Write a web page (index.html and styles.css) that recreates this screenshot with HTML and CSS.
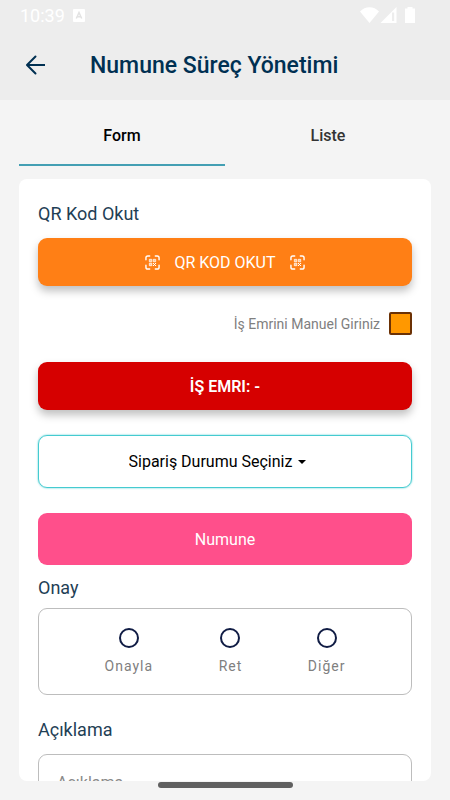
FILE: index.html
```html
<!DOCTYPE html>
<html lang="tr">
<head>
<meta charset="utf-8">
<meta name="viewport" content="width=device-width, initial-scale=1">
<title>Numune Süreç Yönetimi</title>
<link rel="stylesheet" href="styles.css">
</head>
<body>
<svg width="0" height="0" class="sprite" aria-hidden="true">
  <symbol id="qr" viewBox="0 0 16 16">
    <path d="M1 5V3a2 2 0 0 1 2-2h2M11 1h2a2 2 0 0 1 2 2v2M15 11v2a2 2 0 0 1-2 2h-2M5 15H3a2 2 0 0 1-2-2v-2" fill="none" stroke="currentColor" stroke-width="1.5" stroke-linecap="round"/>
    <path d="M4.6 4.6h2.6v2.6H4.6zM8.8 4.6h2.6v2.6H8.8zM4.6 8.8h2.6v2.6H4.6z" fill="currentColor" fill-opacity=".55" stroke="currentColor" stroke-opacity=".85" stroke-width=".9"/>
    <path d="M8.400 8.400h1.200v1.200H8.400zM10.600 8.400h1.200v1.200h-1.200zM9.500 9.500h1.200v1.200H9.500zM8.400 10.600h1.200v1.200H8.400zM10.600 10.600h1.200v1.200h-1.200z" fill="currentColor"/>
  </symbol>
</svg>
<header class="header">
  <div class="status">
    <span class="clock">10:39</span>
    <svg class="app" width="12" height="13" viewBox="0 0 12 13" aria-hidden="true"><rect width="12" height="13" rx="1" fill="#fff"/><path d="M3.300 9.500 6 3.500l2.700 6M4.300 7.800h3.400" fill="none" stroke="#e2e2e2" stroke-width="1.500"/></svg>
    <svg class="signals" width="56" height="16" viewBox="0 0 56 16" fill="#fff" aria-hidden="true"><path d="M0 4.500C5-1.200 14-1.200 19 4.500L9.500 16z"/><path fill-rule="evenodd" d="M20.500 16 36.500 0v16zM32 5.500V14h2.200V5.500z"/><path d="M47.500 0h5v1.500h2.500V16H45V1.500h2.500z"/></svg>
  </div>
  <div class="titlebar">
    <button class="back" type="button" aria-label="Geri"><svg width="20" height="20" viewBox="0 0 20 20" fill="none" stroke="currentColor" stroke-width="2" stroke-linejoin="round" aria-hidden="true"><path d="M20 10H2"/><path d="M10.500 1.500 2 10l8.500 8.500" stroke-linecap="round"/></svg></button>
    <h1 class="title">Numune Süreç Yönetimi</h1>
  </div>
</header>
<nav class="tabs">
  <a class="tab tab-active" href="#form">Form</a>
  <a class="tab" href="#liste">Liste</a>
</nav>
<main class="card" id="form">
  <form class="form">
    <h2 class="label">QR Kod Okut</h2>
    <button class="bar bar-qr" type="button"><svg width="15" height="15" aria-hidden="true"><use href="#qr"/></svg>QR KOD OKUT<svg width="15" height="15" aria-hidden="true"><use href="#qr"/></svg></button>
    <label class="manual">İş Emrini Manuel Giriniz<input class="check" type="checkbox"></label>
    <button class="bar bar-order" type="button">İŞ EMRI: -</button>
    <label class="picker">
      <select class="select" aria-label="Sipariş Durumu"><option>Sipariş Durumu Seçiniz</option></select>
      <svg width="8" height="4" viewBox="0 0 8 4" aria-hidden="true"><path d="M0 0h8L4 4z"/></svg>
    </label>
    <button class="sample" type="button">Numune</button>
    <h2 class="label label-options" id="onay">Onay</h2>
    <div class="options" role="radiogroup" aria-labelledby="onay">
      <label class="option"><input class="radio" type="radio" name="onay">Onayla</label>
      <label class="option"><input class="radio" type="radio" name="onay">Ret</label>
      <label class="option"><input class="radio" type="radio" name="onay">Diğer</label>
    </div>
    <label class="label" for="note">Açıklama</label>
    <textarea class="note" id="note" placeholder="Açıklama"></textarea>
  </form>
</main>
<div class="handle"></div>
</body>
</html>
```
FILE: styles.css
```css
* { box-sizing: border-box; }
body {
  margin: 0;
  height: 100vh;
  display: flex;
  flex-direction: column;
  background: #f4f4f4;
  font-family: Roboto, sans-serif;
  font-size: 16px;
  color: #000;
}
button, select, textarea { font: inherit; }
svg { display: block; flex: none; }
.sprite { position: absolute; }
.header { background: #ededed; color: #003052; flex: none; }
.status { display: flex; align-items: center; height: 30px; padding: 0 34px 0 20px; color: #fff; }
.clock { font-size: 18px; }
.app { margin-left: 8px; }
.signals { margin-left: auto; }
.titlebar { display: flex; align-items: center; gap: 45px; height: 70px; padding: 0 25px; }
.back { border: 0; padding: 0; background: none; color: inherit; }
.title { margin: 0; font-size: 23px; font-weight: 500; }
.tabs { display: flex; flex: none; padding: 0 19px; margin-bottom: 13px; }
.tab {
  flex: 1;
  height: 66px;
  padding-top: 6px;
  display: flex;
  align-items: center;
  justify-content: center;
  border-bottom: 2px solid transparent;
  color: #333;
  font-weight: 500;
  text-decoration: none;
}
.tab-active { color: #000; border-color: #439fb3; }
.card {
  flex: 1;
  min-height: 0;
  margin: 0 19px 19px;
  padding: 23px 19px 0;
  overflow: hidden;
  border-radius: 8px;
  background: #fff;
}
.form { display: flex; flex-direction: column; }
.label { margin: 0 0 12px; font-size: 18px; line-height: 24px; font-weight: 400; color: #1f4055; }
.label-options { margin-bottom: 8px; }
.bar {
  display: flex;
  align-items: center;
  justify-content: center;
  gap: 14px;
  height: 48px;
  border: 0;
  border-radius: 9px;
  color: #fff;
  box-shadow: 0 5px 8px rgba(0, 0, 0, .25);
}
.bar-qr { background: #ff7f15; }
.bar-order { background: #d60000; font-weight: 600; }
.manual { display: flex; align-items: center; justify-content: flex-end; gap: 9px; margin: 26px 0 27px; font-size: 14px; color: #808080; }
.check { appearance: none; width: 23px; height: 23px; margin: 0; border: 2px solid #6b3105; border-radius: 2px; background: #ff9800; }
.picker {
  display: flex;
  align-items: center;
  justify-content: center;
  gap: 5px;
  height: 53px;
  margin: 25px 0;
  padding-right: 16px;
  border: 1px solid #45cbd0;
  border-radius: 9px;
  box-shadow: 0 0 2px #45cbd0;
}
.select { appearance: none; border: 0; padding: 0; background: none; color: #000; }
.sample { height: 52px; margin-bottom: 11px; border: 0; border-radius: 9px; background: #ff4f8b; color: #fff; }
.options {
  display: flex;
  justify-content: space-evenly;
  height: 87px;
  padding-top: 19px;
  margin-bottom: 23px;
  border: 1px solid #bdbdbd;
  border-radius: 9px;
}
.option { display: flex; flex-direction: column; align-items: center; gap: 10px; font-size: 14px; letter-spacing: 1px; color: #808080; }
.radio { appearance: none; width: 20px; height: 20px; margin: 0; border: 2px solid #101c44; border-radius: 50%; }
.note { height: 100px; padding: 18px; border: 1px solid #bdbdbd; border-radius: 9px; resize: none; color: #000; }
.note::placeholder { color: #8a8a8a; }
.handle { position: fixed; bottom: 12px; left: 35%; width: 30%; height: 6px; border-radius: 3px; background: #606060; }
```
